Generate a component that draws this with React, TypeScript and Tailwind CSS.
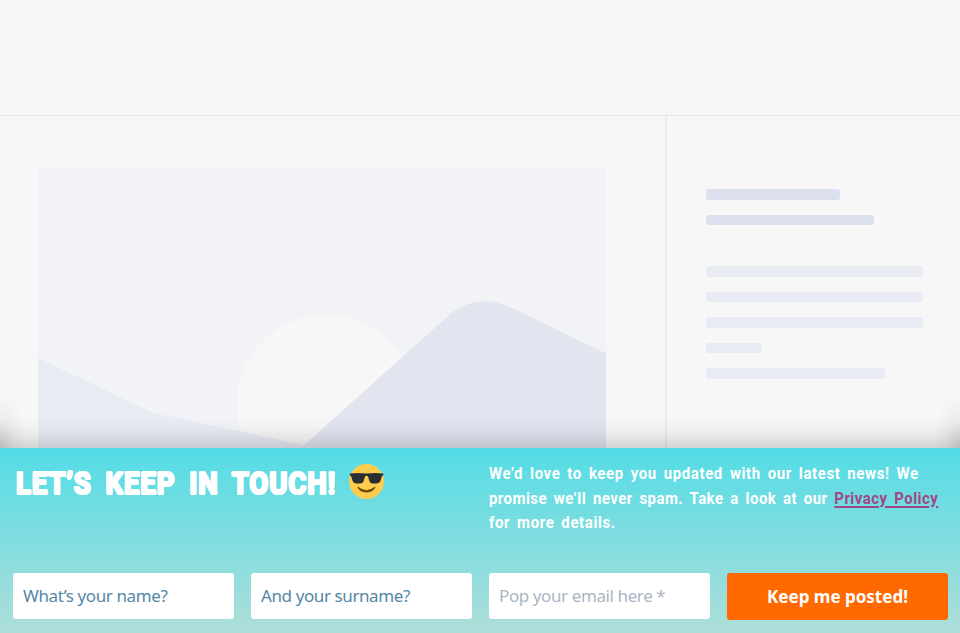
import React from 'react';

const field =
  "h-[46px] w-[221px] rounded-[3px] bg-white px-[10px] pb-[2px] font-['Noto_Sans',sans-serif] text-[17px] tracking-[-.4px] outline-none";

function Scenery() {
  return (
    <svg className="block" width="568" height="281" viewBox="38 167 568 281">
      <rect x="38" y="167" width="568" height="281" fill="#f1f3f7" />
      <circle cx="326.500" cy="404" r="89.500" fill="#f7f7f7" />
      <path d="M38 358 L148 410.500 Q152 412.500 157 413.800 L304 445 L320 450 H38Z" fill="#e8ebf3" />
      <path d="M303 446 L447 317 C465 300 487 297 510 307 L606 353.500 V448 H301Z" fill="#e2e4f0" />
    </svg>
  );
}

function Sunglasses() {
  return (
    <svg className="mt-[16px] ml-[11px] h-[35px] w-[35px] shrink-0" viewBox="0 0 36 36">
      <circle cx="18" cy="18" r="18" fill="#ffcc4d" />
      <path d="M9 23.500 Q18 31 27 23.500 Q25.500 29 18 29 Q10.500 29 9 23.500Z" fill="#664500" stroke="#664500" strokeWidth=".5" />
      <path d="M.8 9.700 Q9 8.900 18 9.800 Q27 8.900 35.200 9.700 V11.600 Q33.800 11.900 33.500 13.500 L32.300 17.500 Q31.500 19.800 28.500 20 H24 Q21.500 19.800 20.900 17.500 L19.800 13.500 Q19.300 12 18 12 Q16.700 12 16.200 13.500 L15.100 17.500 Q14.500 19.800 12 20 H7.500 Q4.500 19.800 3.700 17.500 L2.500 13.500 Q2.200 11.900 .8 11.600Z" fill="#292f33" />
    </svg>
  );
}

export default function App() {
  return (
    <div className="flex h-[633px] w-[960px] flex-col overflow-hidden bg-[#f7f7f7]">
      <header className="h-[116px] shrink-0 border-b border-[#e3e5f0]" />
      <main className="relative flex h-[332px] shrink-0">
        <section className="w-[665px] shrink-0 pt-[51px] pl-[38px]">
          <Scenery />
        </section>
        <aside className="flex grow flex-col border-l-2 border-[#e8ebf2] pt-[73px] pl-[38.500px]">
          <div className="mb-[15px] h-[10.500px] w-[134.500px] rounded-[3px] bg-[#dde0ef]" />
          <div className="mb-[41px] h-[10.500px] w-[168.500px] rounded-[3px] bg-[#dde0ef]" />
          <div className="flex flex-col gap-[15.100px]">
            <div className="h-[10.500px] w-[217.500px] rounded-[3px] bg-[#e8ebf1]" />
            <div className="h-[10.500px] w-[217.500px] rounded-[3px] bg-[#e8ebf3]" />
            <div className="h-[10.500px] w-[217px] rounded-[3px] bg-[#e8ebf3]" />
            <div className="h-[10.500px] w-[56.500px] rounded-[3px] bg-[#e8ebf3]" />
            <div className="h-[10.500px] w-[179px] rounded-[3px] bg-[#e8ebf3]" />
          </div>
        </aside>
        <div className="absolute inset-x-0 bottom-0 h-[30px] bg-[linear-gradient(to_top,rgba(0,0,0,.14),rgba(0,0,0,.07)_35%,rgba(0,0,0,.02)_70%,transparent)]" />
        <div className="absolute bottom-0 left-0 h-[56px] w-[30px] bg-[radial-gradient(ellipse_28px_48px_at_0_90%,rgba(0,0,0,.12),rgba(0,0,0,.04)_50%,transparent)]" />
        <div className="absolute right-0 bottom-0 h-[56px] w-[30px] bg-[radial-gradient(ellipse_28px_48px_at_100%_90%,rgba(0,0,0,.12),rgba(0,0,0,.04)_50%,transparent)]" />
      </main>
      <footer className="flex h-[185px] shrink-0 flex-col bg-[linear-gradient(#53dce6,#afded9)]">
        <div className="flex h-[125px] shrink-0">
          <div className="flex w-[489px] shrink-0 pl-[15px]">
            <h1 className="mt-[13px] w-[323px] shrink-0 whitespace-nowrap font-['Roboto',sans-serif] text-[32px] leading-[44px] font-bold text-white [text-shadow:1.200px_0_white,-1.200px_0_white,0_1px_white,0_-1px_white,.8px_.8px_white,-.8px_.8px_white,.8px_-.8px_white,-.8px_-.8px_white]">
              <span className="inline-block origin-left translate-x-px scale-x-[.86] tracking-[1.100px] [word-spacing:7px]">LET’S KEEP IN TOUCH!</span>
            </h1>
            <Sunglasses />
          </div>
          <p className="w-[455px] origin-left scale-x-[.88] pt-[13px] font-['Roboto',sans-serif] text-[17px] leading-[24.700px] font-bold tracking-[.7px] whitespace-nowrap text-white [word-spacing:3px]">
            <span className="block">We’d love to keep you updated with our latest news! We</span>
            <span className="block tracking-[.52px]">promise we’ll never spam. Take a look at our <a className="text-[#a04783] underline decoration-[1.500px] underline-offset-2">Privacy Policy</a></span>
            <span className="block">for more details.</span>
          </p>
        </div>
        <form className="flex gap-[17px] pl-[13px]">
          <input className={field + " placeholder:text-[#5487a8]"} placeholder="What’s your name?" />
          <input className={field + " placeholder:text-[#5487a8]"} placeholder="And your surname?" />
          <input className={field + " placeholder:text-[#abb5c4]"} placeholder="Pop your email here *" />
          <button type="button" className="h-[47px] w-[221px] rounded-[3px] bg-[#ff6900] font-['Noto_Sans',sans-serif] text-[17px] font-bold text-white">Keep me posted!</button>
        </form>
      </footer>
    </div>
  );
}
